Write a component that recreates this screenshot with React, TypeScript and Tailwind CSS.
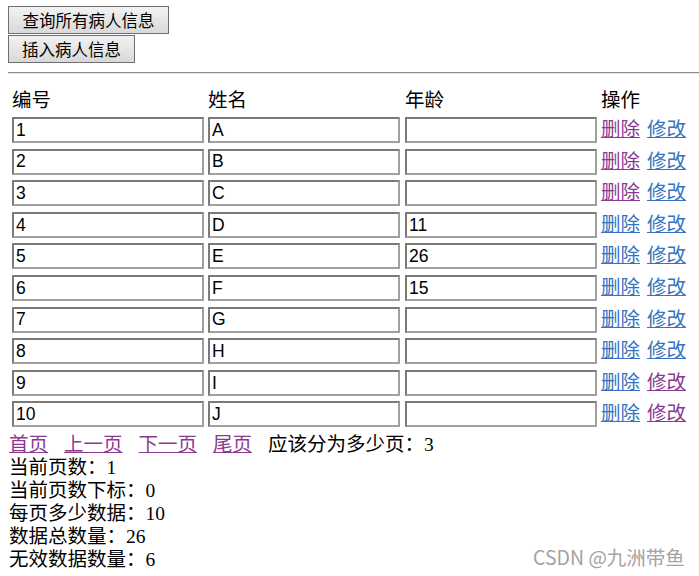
import React from "react";

type Row = { id: string; name: string; age: string; del: boolean; edit: boolean };

// true = visited (purple) link
const rows: Row[] = [
  { id: "1", name: "A", age: "", del: true, edit: false },
  { id: "2", name: "B", age: "", del: true, edit: false },
  { id: "3", name: "C", age: "", del: true, edit: false },
  { id: "4", name: "D", age: "11", del: false, edit: false },
  { id: "5", name: "E", age: "26", del: false, edit: false },
  { id: "6", name: "F", age: "15", del: false, edit: false },
  { id: "7", name: "G", age: "", del: false, edit: false },
  { id: "8", name: "H", age: "", del: false, edit: false },
  { id: "9", name: "I", age: "", del: false, edit: true },
  { id: "10", name: "J", age: "", del: false, edit: true },
];

const serif = "font-['Liberation_Serif','Noto_Sans_CJK_SC',serif]";
const purple = "text-[#8a3a90] decoration-[#8a3a90]";
const blue = "text-[#3573c0] decoration-[#3573c0]";

const Field: React.FC<{ value: string }> = ({ value }) => (
  <input
    readOnly
    value={value}
    className="w-[192px] h-[26px] border-2 border-t-[#7a7a7a] border-l-[#7a7a7a] border-r-[#a0a0a0] border-b-[#a0a0a0] bg-white px-[2px] text-[17.5px] text-black font-['Liberation_Sans',sans-serif] outline-none"
  />
);

const Btn: React.FC<{ label: string; w: string }> = ({ label, w }) => (
  <button
    className={`${w} block h-[28px] border border-[#6f6f6f] bg-gradient-to-b from-[#f2f2f2] to-[#d9d9d9] text-[16.5px] text-black font-['Noto_Sans_CJK_SC',sans-serif] leading-none`}
  >
    {label}
  </button>
);

export default function App() {
  return (
    <div className={`relative w-[699px] h-[576px] overflow-hidden bg-white pl-[8px] pt-[6px] text-black ${serif}`}>
      <Btn label="查询所有病人信息" w="w-[161px]" />
      <div className="mt-[1px]">
        <Btn label="插入病人信息" w="w-[127px]" />
      </div>

      <div className="mt-[9px] h-[2px] border-t border-[#8a8a8a] border-b border-b-[#e6e6e6]" />

      <div className="pl-[4px]">
        <div className="mt-[14px] grid grid-cols-[196px_197px_196px_1fr] h-[23px] text-[19.5px] leading-[25px]">
          <span>编号</span>
          <span>姓名</span>
          <span>年龄</span>
          <span>操作</span>
        </div>

        <div className="mt-[6px]">
          {rows.map((r) => (
            <div key={r.id} className="grid grid-cols-[196px_197px_196px_1fr] h-[31.6px]">
              <Field value={r.id} />
              <Field value={r.name} />
              <Field value={r.age} />
              <div className="h-[26px] flex items-center gap-[7px] text-[19.5px] leading-[26px] whitespace-nowrap">
                <a href="#" className={`underline ${r.del ? purple : blue}`}>删除</a>
                <a href="#" className={`underline ${r.edit ? purple : blue}`}>修改</a>
              </div>
            </div>
          ))}
        </div>
      </div>

      <div className="mt-[0.5px] pl-[1px] text-[19.5px] leading-[23px]">
        <div className="flex gap-[16px] whitespace-nowrap">
          <a href="#" className={`underline ${purple}`}>首页</a>
          <a href="#" className={`underline ${purple}`}>上一页</a>
          <a href="#" className={`underline ${purple}`}>下一页</a>
          <a href="#" className={`underline ${purple}`}>尾页</a>
          <span>应该分为多少页：3</span>
        </div>
        <div>当前页数：1</div>
        <div>当前页数下标：0</div>
        <div>每页多少数据：10</div>
        <div>数据总数量：26</div>
        <div>无效数据数量：6</div>
      </div>

      <div className="absolute left-[533px] top-[544px] text-[19.5px] text-[#a3a3a3] font-['Noto_Sans_CJK_SC',sans-serif] leading-[26px]">
        CSDN @九洲带鱼
      </div>
    </div>
  );
}
